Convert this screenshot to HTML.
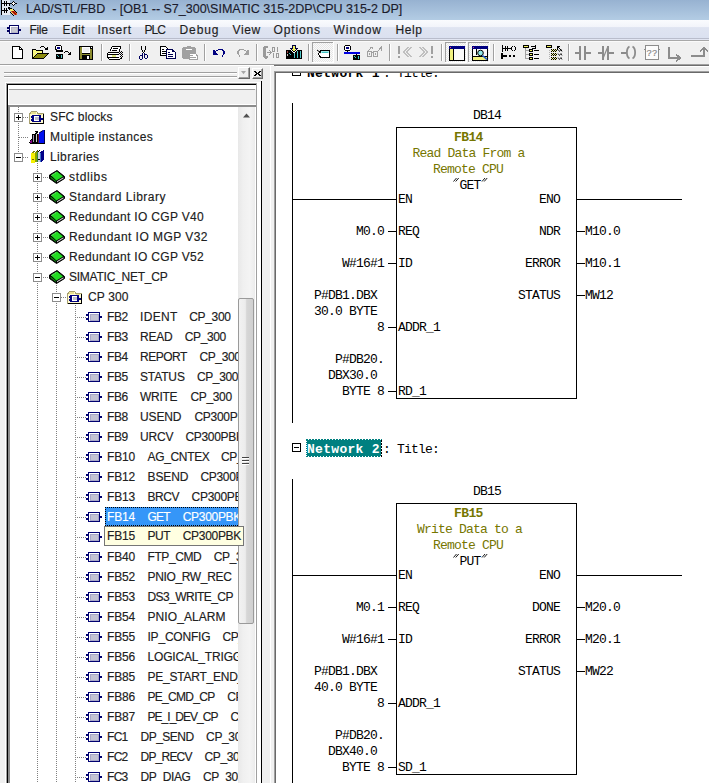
<!DOCTYPE html>
<html><head><meta charset="utf-8"><style>
*{margin:0;padding:0;box-sizing:border-box}
html,body{width:709px;height:783px;overflow:hidden;background:#f0f0f0}
body{position:relative;font-family:"Liberation Sans",sans-serif;font-size:12px;color:#1a1a1a}
.a{position:absolute}
.t{position:absolute;white-space:pre;line-height:20px;-webkit-text-stroke:0.15px currentColor}
svg{position:absolute;overflow:visible}
</style></head><body>

<div class="a" style="left:0;top:0;width:709px;height:20px;background:linear-gradient(#97b2d1,#b3cce4)"></div>
<div class="t" style="left:26px;top:-1px;font-size:12.5px;color:#1b1b2b">LAD/STL/FBD  - [OB1 -- S7_300\SIMATIC 315-2DP\CPU 315-2 DP]</div>
<svg style="left:0;top:0px" width="18" height="17" viewBox="0 0 18 17" shape-rendering="crispEdges"><rect x="2" y="0" width="8" height="15" fill="#eef2f6" opacity=".85"/><rect x="1" y="0" width="1" height="15" fill="#000"/><rect x="2" y="3" width="9" height="1" fill="#000"/><rect x="4" y="1" width="1" height="5" fill="#000"/><rect x="6" y="1" width="1" height="5" fill="#000"/><rect x="9" y="3" width="1" height="3" fill="#000"/><rect x="2" y="10" width="6" height="1" fill="#000"/><rect x="4" y="8" width="1" height="5" fill="#000"/><rect x="6" y="8" width="1" height="5" fill="#000"/><rect x="12" y="2" width="3" height="3" fill="#fff"/><rect x="13" y="1" width="1" height="1" fill="#000"/><rect x="12" y="2" width="1" height="1" fill="#000"/><rect x="14" y="2" width="1" height="1" fill="#000"/><rect x="11" y="3" width="1" height="1" fill="#000"/><rect x="15" y="3" width="1" height="1" fill="#000"/><rect x="12" y="4" width="1" height="1" fill="#000"/><rect x="14" y="4" width="1" height="1" fill="#000"/><rect x="13" y="5" width="1" height="1" fill="#000"/><rect x="16" y="3" width="1" height="1" fill="#000"/><rect x="8" y="7" width="1" height="1" fill="#000"/><rect x="9" y="7" width="1" height="1" fill="#000"/><rect x="10" y="8" width="1" height="1" fill="#000"/><rect x="9" y="8" width="1" height="1" fill="#000"/><rect x="8" y="8" width="1" height="1" fill="#000"/><rect x="9" y="9" width="1" height="1" fill="#000"/><rect x="11" y="8" width="1" height="1" fill="#000"/><rect x="10" y="9" width="1" height="1" fill="#f8f060"/><rect x="11" y="9" width="1" height="1" fill="#f8f060"/><rect x="12" y="10" width="1" height="1" fill="#f8f060"/><rect x="10" y="10" width="1" height="1" fill="#f8f060"/><rect x="11" y="10" width="1" height="1" fill="#f8f060"/><rect x="13" y="9" width="1" height="1" fill="#000"/><rect x="14" y="10" width="1" height="1" fill="#000"/><rect x="15" y="11" width="1" height="1" fill="#000"/><rect x="16" y="12" width="1" height="1" fill="#000"/><rect x="10" y="12" width="1" height="1" fill="#000"/><rect x="11" y="13" width="1" height="1" fill="#000"/><rect x="12" y="14" width="1" height="1" fill="#000"/><rect x="13" y="15" width="1" height="1" fill="#000"/><rect x="12" y="11" width="1" height="1" fill="#a01000"/><rect x="13" y="12" width="1" height="1" fill="#a01000"/><rect x="14" y="13" width="1" height="1" fill="#a01000"/><rect x="15" y="14" width="1" height="1" fill="#a01000"/><rect x="13" y="11" width="1" height="1" fill="#a01000"/><rect x="14" y="12" width="1" height="1" fill="#a01000"/><rect x="15" y="13" width="1" height="1" fill="#a01000"/><rect x="11" y="11" width="1" height="1" fill="#e06020"/><rect x="12" y="12" width="1" height="1" fill="#e06020"/><rect x="13" y="13" width="1" height="1" fill="#e06020"/><rect x="14" y="14" width="1" height="1" fill="#e06020"/><rect x="14" y="11" width="1" height="1" fill="#e06020"/><rect x="15" y="12" width="1" height="1" fill="#e06020"/><rect x="16" y="13" width="1" height="1" fill="#e06020"/><rect x="16" y="14" width="1" height="1" fill="#e06020"/><rect x="12" y="9" width="1" height="1" fill="#f8e080"/><rect x="13" y="10" width="1" height="1" fill="#f8e080"/><rect x="11" y="12" width="1" height="1" fill="#f8e080"/><rect x="12" y="13" width="1" height="1" fill="#f8e080"/></svg>
<div class="a" style="left:0;top:20px;width:709px;height:18px;background:linear-gradient(#fafbfe 0,#f2f4fa 38%,#dfe4f1 42%,#dbe1f0 100%)"></div>
<div class="a" style="left:0;top:38px;width:709px;height:1px;background:#b9bdcc"></div>
<div class="a" style="left:0;top:39px;width:709px;height:1px;background:#e2e6f3"></div>
<div class="a" style="left:0;top:40px;width:709px;height:1px;background:#a8a8a8"></div>
<div class="a" style="left:0;top:41px;width:709px;height:1px;background:#fafafa"></div>
<svg style="left:0;top:20px" width="24" height="18" viewBox="0 20 24 18" shape-rendering="crispEdges"><rect x="9" y="25" width="10" height="9" fill="#000060"/><rect x="10" y="26" width="8" height="7" fill="#fff"/><rect x="11" y="27" width="7" height="6" fill="#b4b4c8"/><rect x="12" y="28" width="5" height="4" fill="#c8c8d0"/><rect x="7" y="27" width="2" height="2" fill="#000060"/><rect x="7" y="30" width="2" height="2" fill="#000060"/><rect x="19" y="29" width="2" height="2" fill="#000060"/></svg>
<div class="t" style="left:29.5px;top:21px;line-height:19px;letter-spacing:-0.315px;color:#1e1e1e">File</div>
<div class="t" style="left:62.5px;top:21px;line-height:19px;letter-spacing:0.438px;color:#1e1e1e">Edit</div>
<div class="t" style="left:97.5px;top:21px;line-height:19px;letter-spacing:0.697px;color:#1e1e1e">Insert</div>
<div class="t" style="left:144.5px;top:21px;line-height:19px;letter-spacing:-0.922px;color:#1e1e1e">PLC</div>
<div class="t" style="left:179.5px;top:21px;line-height:19px;letter-spacing:0.906px;color:#1e1e1e">Debug</div>
<div class="t" style="left:232.5px;top:21px;line-height:19px;letter-spacing:0.601px;color:#1e1e1e">View</div>
<div class="t" style="left:273.5px;top:21px;line-height:19px;letter-spacing:0.873px;color:#1e1e1e">Options</div>
<div class="t" style="left:333.5px;top:21px;line-height:19px;letter-spacing:0.963px;color:#1e1e1e">Window</div>
<div class="t" style="left:395.5px;top:21px;line-height:19px;letter-spacing:0.571px;color:#1e1e1e">Help</div>
<div class="a" style="left:0;top:64px;width:709px;height:1px;background:#a0a0a0"></div>
<div class="a" style="left:0;top:65px;width:709px;height:1px;background:#fff"></div>
<svg style="left:0;top:40px" width="709" height="25" viewBox="0 40 709 25" shape-rendering="crispEdges"><path d="M12.5 46.5h7l3 3v9h-10z" fill="#fff" stroke="#000"/><path d="M19.5 46.5v3h3" fill="none" stroke="#000"/><rect x="33" y="50" width="3" height="8" fill="#f8f880"/><rect x="36" y="51" width="6" height="2" fill="#f8f880"/><rect x="37" y="54" width="10" height="1" fill="#8c8c10"/><rect x="36" y="55" width="10" height="1" fill="#8c8c10"/><rect x="35" y="56" width="10" height="1" fill="#8c8c10"/><rect x="34" y="57" width="10" height="1" fill="#8c8c10"/><rect x="32" y="49" width="1" height="10" fill="#000"/><rect x="33" y="49" width="3" height="1" fill="#000"/><rect x="36" y="50" width="7" height="1" fill="#000"/><rect x="42" y="50" width="1" height="3" fill="#000"/><rect x="37" y="53" width="12" height="1" fill="#000"/><rect x="32" y="58" width="12" height="1" fill="#000"/><rect x="36" y="54" width="1" height="1" fill="#000"/><rect x="35" y="55" width="1" height="1" fill="#000"/><rect x="34" y="56" width="1" height="1" fill="#000"/><rect x="33" y="57" width="1" height="1" fill="#000"/><rect x="47" y="54" width="1" height="1" fill="#000"/><rect x="46" y="55" width="1" height="1" fill="#000"/><rect x="45" y="56" width="1" height="1" fill="#000"/><rect x="44" y="57" width="1" height="1" fill="#000"/><rect x="40" y="47" width="1" height="1" fill="#000"/><rect x="41" y="46" width="1" height="1" fill="#000"/><rect x="42" y="46" width="1" height="1" fill="#000"/><rect x="43" y="46" width="1" height="1" fill="#000"/><rect x="44" y="47" width="1" height="1" fill="#000"/><rect x="45" y="48" width="1" height="1" fill="#000"/><rect x="47" y="47" width="1" height="1" fill="#000"/><rect x="46" y="48" width="1" height="1" fill="#000"/><rect x="47" y="48" width="1" height="1" fill="#000"/><rect x="45" y="49" width="1" height="1" fill="#000"/><rect x="46" y="49" width="1" height="1" fill="#000"/><rect x="47" y="49" width="1" height="1" fill="#000"/><rect x="56" y="46" width="5" height="4" fill="#fff"/><rect x="56" y="45" width="5" height="1" fill="#000"/><rect x="55" y="46" width="1" height="4" fill="#000"/><rect x="61" y="46" width="1" height="4" fill="#000"/><rect x="56" y="49" width="1" height="1" fill="#000"/><rect x="57" y="47" width="3" height="2" fill="#000080"/><rect x="56" y="50" width="7" height="2" fill="#000"/><rect x="56" y="54" width="7" height="5" fill="#000"/><rect x="57" y="55" width="1" height="1" fill="#40c0c0"/><rect x="58" y="56" width="1" height="1" fill="#40c0c0"/><rect x="61" y="55" width="1" height="3" fill="#60d0d0"/><rect x="64" y="52" width="1" height="1" fill="#000"/><rect x="65" y="51" width="1" height="1" fill="#000"/><rect x="66" y="51" width="1" height="1" fill="#000"/><rect x="67" y="51" width="1" height="1" fill="#000"/><rect x="68" y="52" width="1" height="1" fill="#000"/><rect x="70" y="52" width="1" height="1" fill="#000"/><rect x="69" y="53" width="1" height="1" fill="#000"/><rect x="70" y="53" width="1" height="1" fill="#000"/><rect x="68" y="54" width="1" height="1" fill="#000"/><rect x="69" y="54" width="1" height="1" fill="#000"/><rect x="70" y="54" width="1" height="1" fill="#000"/><rect x="79" y="46" width="14" height="14" fill="#000"/><rect x="80" y="47" width="2" height="12" fill="#8c8c30"/><rect x="90" y="49" width="2" height="10" fill="#8c8c30"/><rect x="80" y="54" width="12" height="1" fill="#8c8c30"/><rect x="82" y="47" width="8" height="6" fill="#fff"/><rect x="83" y="48" width="6" height="4" fill="#eeeeee"/><rect x="82" y="55" width="8" height="4" fill="#000"/><rect x="87" y="56" width="2" height="3" fill="#fff"/><rect x="91" y="47" width="1" height="1" fill="#fff"/><rect x="101" y="44" width="1" height="17" fill="#a0a0a0"/><rect x="102" y="44" width="1" height="17" fill="#fff"/><rect x="112" y="47" width="8" height="4" fill="#fff"/><rect x="111" y="48" width="1" height="3" fill="#fff"/><rect x="112" y="46" width="9" height="1" fill="#000"/><rect x="111" y="47" width="1" height="2" fill="#000"/><rect x="110" y="49" width="1" height="2" fill="#000"/><rect x="120" y="47" width="1" height="2" fill="#000"/><rect x="119" y="49" width="1" height="2" fill="#000"/><rect x="113" y="48" width="5" height="1" fill="#000"/><rect x="112" y="50" width="5" height="1" fill="#000"/><rect x="108" y="53" width="11" height="6" fill="#fff"/><rect x="108" y="52" width="11" height="1" fill="#000"/><rect x="107" y="53" width="1" height="5" fill="#000"/><rect x="108" y="54" width="11" height="1" fill="#000"/><rect x="108" y="57" width="11" height="1" fill="#000"/><rect x="109" y="59" width="10" height="1" fill="#000"/><rect x="108" y="58" width="1" height="1" fill="#000"/><rect x="112" y="55" width="4" height="2" fill="#e0e880"/><rect x="119" y="51" width="1" height="1" fill="#000"/><rect x="121" y="51" width="1" height="1" fill="#000"/><rect x="120" y="52" width="1" height="1" fill="#000"/><rect x="122" y="52" width="1" height="1" fill="#000"/><rect x="119" y="53" width="1" height="1" fill="#000"/><rect x="121" y="53" width="1" height="1" fill="#000"/><rect x="120" y="54" width="1" height="1" fill="#000"/><rect x="122" y="54" width="1" height="1" fill="#000"/><rect x="121" y="55" width="1" height="1" fill="#000"/><rect x="120" y="56" width="1" height="1" fill="#000"/><rect x="122" y="56" width="1" height="1" fill="#000"/><rect x="121" y="57" width="1" height="1" fill="#000"/><rect x="120" y="58" width="1" height="1" fill="#000"/><rect x="119" y="59" width="1" height="1" fill="#000"/><rect x="121" y="58" width="1" height="1" fill="#000"/><rect x="129" y="44" width="1" height="17" fill="#a0a0a0"/><rect x="130" y="44" width="1" height="17" fill="#fff"/><rect x="141" y="46" width="1" height="1" fill="#000"/><rect x="141" y="47" width="1" height="1" fill="#000"/><rect x="141" y="48" width="1" height="1" fill="#000"/><rect x="141" y="49" width="1" height="1" fill="#000"/><rect x="142" y="50" width="1" height="1" fill="#000"/><rect x="142" y="51" width="1" height="1" fill="#000"/><rect x="145" y="46" width="1" height="1" fill="#000"/><rect x="145" y="47" width="1" height="1" fill="#000"/><rect x="145" y="48" width="1" height="1" fill="#000"/><rect x="145" y="49" width="1" height="1" fill="#000"/><rect x="144" y="50" width="1" height="1" fill="#000"/><rect x="144" y="51" width="1" height="1" fill="#000"/><rect x="143" y="52" width="1" height="1" fill="#000"/><rect x="142" y="53" width="1" height="1" fill="#000060"/><rect x="144" y="53" width="1" height="1" fill="#000060"/><rect x="140" y="55" width="1" height="1" fill="#000060"/><rect x="141" y="55" width="1" height="1" fill="#000060"/><rect x="139" y="56" width="1" height="1" fill="#000060"/><rect x="139" y="57" width="1" height="1" fill="#000060"/><rect x="139" y="58" width="1" height="1" fill="#000060"/><rect x="142" y="54" width="1" height="1" fill="#000060"/><rect x="142" y="55" width="1" height="1" fill="#000060"/><rect x="142" y="56" width="1" height="1" fill="#000060"/><rect x="142" y="57" width="1" height="1" fill="#000060"/><rect x="142" y="58" width="1" height="1" fill="#000060"/><rect x="140" y="59" width="1" height="1" fill="#000060"/><rect x="141" y="59" width="1" height="1" fill="#000060"/><rect x="145" y="54" width="1" height="1" fill="#000060"/><rect x="146" y="54" width="1" height="1" fill="#000060"/><rect x="144" y="54" width="1" height="1" fill="#000060"/><rect x="144" y="55" width="1" height="1" fill="#000060"/><rect x="144" y="56" width="1" height="1" fill="#000060"/><rect x="144" y="57" width="1" height="1" fill="#000060"/><rect x="147" y="55" width="1" height="1" fill="#000060"/><rect x="147" y="56" width="1" height="1" fill="#000060"/><rect x="147" y="57" width="1" height="1" fill="#000060"/><rect x="145" y="58" width="1" height="1" fill="#000060"/><rect x="146" y="58" width="1" height="1" fill="#000060"/><path d="M160.5 46.5h5l2 2v7h-7z" fill="#fff" stroke="#000"/><rect x="162" y="49" width="2" height="1" fill="#000"/><rect x="162" y="51" width="4" height="1" fill="#000"/><rect x="162" y="53" width="4" height="1" fill="#000"/><path d="M166.5 49.5h6l2.5 2.5v6.5h-8.5z" fill="#fff" stroke="#000050"/><rect x="172" y="50" width="1" height="2" fill="#000050"/><rect x="172" y="51" width="3" height="1" fill="#000050"/><rect x="168" y="52" width="2" height="1" fill="#000050"/><rect x="168" y="54" width="5" height="1" fill="#000050"/><rect x="168" y="56" width="5" height="1" fill="#000050"/><path d="M183 47h4v-1h4v1h4v1h1v10h-1v1h-12v-1h-1v-10h1z" fill="#a0a0a0"/><rect x="186" y="49" width="6" height="1" fill="#fff"/><path d="M189.5 53.5h5.5l2 2v4h-7.5z" fill="#fff" stroke="#a0a0a0"/><rect x="195" y="54" width="1" height="1" fill="#fff"/><rect x="190" y="55" width="3" height="1" fill="#a0a0a0"/><rect x="190" y="57" width="6" height="1" fill="#a0a0a0"/><rect x="204" y="44" width="1" height="17" fill="#a0a0a0"/><rect x="205" y="44" width="1" height="17" fill="#fff"/><rect x="213" y="50" width="1" height="1" fill="#000080"/><rect x="213" y="51" width="1" height="1" fill="#000080"/><rect x="214" y="51" width="1" height="1" fill="#000080"/><rect x="213" y="52" width="1" height="1" fill="#000080"/><rect x="214" y="52" width="1" height="1" fill="#000080"/><rect x="215" y="52" width="1" height="1" fill="#000080"/><rect x="213" y="53" width="1" height="1" fill="#000080"/><rect x="214" y="53" width="1" height="1" fill="#000080"/><rect x="215" y="53" width="1" height="1" fill="#000080"/><rect x="216" y="53" width="1" height="1" fill="#000080"/><rect x="213" y="54" width="1" height="1" fill="#000080"/><rect x="214" y="54" width="1" height="1" fill="#000080"/><rect x="215" y="54" width="1" height="1" fill="#000080"/><rect x="216" y="54" width="1" height="1" fill="#000080"/><rect x="217" y="54" width="1" height="1" fill="#000080"/><rect x="214" y="50" width="1" height="1" fill="#000080"/><rect x="215" y="51" width="1" height="1" fill="#000080"/><rect x="216" y="50" width="1" height="1" fill="#000080"/><rect x="217" y="50" width="1" height="1" fill="#000080"/><rect x="218" y="49" width="1" height="1" fill="#000080"/><rect x="219" y="49" width="1" height="1" fill="#000080"/><rect x="220" y="49" width="1" height="1" fill="#000080"/><rect x="221" y="49" width="1" height="1" fill="#000080"/><rect x="222" y="49" width="1" height="1" fill="#000080"/><rect x="222" y="50" width="1" height="1" fill="#000080"/><rect x="223" y="50" width="1" height="1" fill="#000080"/><rect x="223" y="51" width="1" height="1" fill="#000080"/><rect x="224" y="51" width="1" height="1" fill="#000080"/><rect x="223" y="52" width="1" height="1" fill="#000080"/><rect x="224" y="52" width="1" height="1" fill="#000080"/><rect x="223" y="53" width="1" height="1" fill="#000080"/><rect x="224" y="53" width="1" height="1" fill="#000080"/><rect x="223" y="54" width="1" height="1" fill="#000080"/><rect x="222" y="55" width="1" height="1" fill="#000080"/><rect x="222" y="56" width="1" height="1" fill="#000080"/><rect x="248" y="50" width="1" height="1" fill="#a0a0a0"/><rect x="248" y="51" width="1" height="1" fill="#a0a0a0"/><rect x="247" y="51" width="1" height="1" fill="#a0a0a0"/><rect x="248" y="52" width="1" height="1" fill="#a0a0a0"/><rect x="247" y="52" width="1" height="1" fill="#a0a0a0"/><rect x="246" y="52" width="1" height="1" fill="#a0a0a0"/><rect x="248" y="53" width="1" height="1" fill="#a0a0a0"/><rect x="247" y="53" width="1" height="1" fill="#a0a0a0"/><rect x="246" y="53" width="1" height="1" fill="#a0a0a0"/><rect x="245" y="53" width="1" height="1" fill="#a0a0a0"/><rect x="248" y="54" width="1" height="1" fill="#a0a0a0"/><rect x="247" y="54" width="1" height="1" fill="#a0a0a0"/><rect x="246" y="54" width="1" height="1" fill="#a0a0a0"/><rect x="245" y="54" width="1" height="1" fill="#a0a0a0"/><rect x="244" y="54" width="1" height="1" fill="#a0a0a0"/><rect x="247" y="50" width="1" height="1" fill="#a0a0a0"/><rect x="246" y="51" width="1" height="1" fill="#a0a0a0"/><rect x="245" y="50" width="1" height="1" fill="#a0a0a0"/><rect x="244" y="50" width="1" height="1" fill="#a0a0a0"/><rect x="243" y="49" width="1" height="1" fill="#a0a0a0"/><rect x="242" y="49" width="1" height="1" fill="#a0a0a0"/><rect x="241" y="49" width="1" height="1" fill="#a0a0a0"/><rect x="240" y="49" width="1" height="1" fill="#a0a0a0"/><rect x="239" y="49" width="1" height="1" fill="#a0a0a0"/><rect x="239" y="50" width="1" height="1" fill="#a0a0a0"/><rect x="238" y="50" width="1" height="1" fill="#a0a0a0"/><rect x="238" y="51" width="1" height="1" fill="#a0a0a0"/><rect x="237" y="51" width="1" height="1" fill="#a0a0a0"/><rect x="238" y="52" width="1" height="1" fill="#a0a0a0"/><rect x="237" y="52" width="1" height="1" fill="#a0a0a0"/><rect x="238" y="53" width="1" height="1" fill="#a0a0a0"/><rect x="237" y="53" width="1" height="1" fill="#a0a0a0"/><rect x="238" y="54" width="1" height="1" fill="#a0a0a0"/><rect x="239" y="55" width="1" height="1" fill="#a0a0a0"/><rect x="239" y="56" width="1" height="1" fill="#a0a0a0"/><rect x="256" y="44" width="1" height="17" fill="#a0a0a0"/><rect x="257" y="44" width="1" height="17" fill="#fff"/><g fill="#9a9a9a"><rect x="263" y="47" width="3" height="10"/><rect x="264" y="46" width="4" height="2"/><rect x="264" y="56" width="4" height="2"/><rect x="265" y="58" width="2" height="1"/><rect x="267" y="52" width="4" height="1"/><rect x="269" y="50" width="1" height="1"/><rect x="270" y="51" width="1" height="3"/><rect x="269" y="54" width="1" height="1"/><rect x="271" y="52" width="1" height="1"/><rect x="277" y="47" width="1" height="5"/><rect x="273" y="53" width="1" height="5"/></g><rect x="272.5" y="47.5" width="2" height="4" fill="none" stroke="#9a9a9a"/><rect x="276.5" y="53.5" width="2" height="4" fill="none" stroke="#9a9a9a"/><rect x="286" y="50" width="16" height="9" fill="#000"/><rect x="287" y="51" width="1" height="2" fill="#a04040"/><rect x="287" y="54" width="1" height="2" fill="#c0c0c0"/><rect x="289" y="53" width="1" height="1" fill="#40c0c0"/><rect x="290" y="54" width="1" height="1" fill="#40c0c0"/><rect x="294" y="53" width="1" height="5" fill="#50c8c8"/><rect x="297" y="51" width="1" height="7" fill="#50c8c8"/><rect x="300" y="51" width="1" height="7" fill="#50c8c8"/><rect x="292" y="45" width="1" height="1" fill="#000040"/><rect x="293" y="45" width="1" height="1" fill="#000040"/><rect x="294" y="45" width="1" height="1" fill="#000040"/><rect x="295" y="45" width="1" height="1" fill="#000040"/><rect x="292" y="46" width="1" height="1" fill="#000040"/><rect x="292" y="47" width="1" height="1" fill="#000040"/><rect x="295" y="46" width="1" height="1" fill="#000040"/><rect x="295" y="47" width="1" height="1" fill="#000040"/><rect x="290" y="48" width="1" height="1" fill="#000040"/><rect x="291" y="48" width="1" height="1" fill="#000040"/><rect x="292" y="48" width="1" height="1" fill="#000040"/><rect x="295" y="48" width="1" height="1" fill="#000040"/><rect x="296" y="48" width="1" height="1" fill="#000040"/><rect x="297" y="48" width="1" height="1" fill="#000040"/><rect x="291" y="49" width="1" height="1" fill="#000040"/><rect x="296" y="49" width="1" height="1" fill="#000040"/><rect x="293" y="46" width="1" height="1" fill="#f0f060"/><rect x="294" y="46" width="1" height="1" fill="#f0f060"/><rect x="293" y="47" width="1" height="1" fill="#f0f060"/><rect x="294" y="47" width="1" height="1" fill="#f0f060"/><rect x="293" y="48" width="1" height="1" fill="#f0f060"/><rect x="294" y="48" width="1" height="1" fill="#f0f060"/><rect x="292" y="49" width="1" height="1" fill="#f0f060"/><rect x="293" y="49" width="1" height="1" fill="#f0f060"/><rect x="294" y="49" width="1" height="1" fill="#f0f060"/><rect x="295" y="49" width="1" height="1" fill="#f0f060"/><rect x="293" y="50" width="1" height="1" fill="#f0f060"/><rect x="294" y="50" width="1" height="1" fill="#f0f060"/><rect x="291" y="50" width="1" height="1" fill="#ffffff"/><rect x="292" y="51" width="1" height="1" fill="#ffffff"/><rect x="293" y="52" width="1" height="1" fill="#ffffff"/><rect x="296" y="50" width="1" height="1" fill="#ffffff"/><rect x="295" y="51" width="1" height="1" fill="#ffffff"/><rect x="294" y="52" width="1" height="1" fill="#ffffff"/><rect x="308" y="44" width="1" height="17" fill="#a0a0a0"/><rect x="309" y="44" width="1" height="17" fill="#fff"/><defs><pattern id="chk312" width="2" height="2" patternUnits="userSpaceOnUse" x="312" y="42"><rect width="2" height="2" fill="#fafafa"/><rect width="1" height="1" fill="#e6e6e6"/><rect x="1" y="1" width="1" height="1" fill="#e6e6e6"/></pattern></defs><rect x="312" y="42" width="22" height="21" fill="url(#chk312)"/><rect x="312" y="42" width="22" height="1" fill="#a0a0a0"/><rect x="312" y="42" width="1" height="21" fill="#a0a0a0"/><rect x="312" y="62" width="22" height="1" fill="#fff"/><rect x="333" y="42" width="1" height="21" fill="#fff"/><path d="M321 50.5h8.5v7h-8.5l-3-3.5z" fill="#fff" stroke="#000"/><rect x="321" y="51" width="8" height="2" fill="#a0e8e8"/><rect x="322" y="52" width="6" height="1" fill="#40c0c0"/><path d="M317 50l4 3" stroke="#000" shape-rendering="auto"/><rect x="337" y="44" width="1" height="17" fill="#a0a0a0"/><rect x="338" y="44" width="1" height="17" fill="#fff"/><rect x="345" y="45" width="5" height="1" fill="#000"/><rect x="344" y="46" width="1" height="4" fill="#000"/><rect x="350" y="46" width="1" height="4" fill="#000"/><rect x="345" y="50" width="5" height="1" fill="#000"/><rect x="345" y="46" width="5" height="4" fill="#fff"/><rect x="346" y="47" width="3" height="2" fill="#000080"/><rect x="347" y="51" width="1" height="1" fill="#000"/><rect x="344" y="52" width="16" height="2" fill="#0000e0"/><rect x="356" y="54" width="1" height="1" fill="#000"/><rect x="353" y="55" width="7" height="5" fill="#000"/><rect x="354" y="56" width="1" height="1" fill="#3cc"/><rect x="355" y="57" width="1" height="1" fill="#3cc"/><rect x="358" y="56" width="1" height="3" fill="#3cc"/><g fill="none" stroke="#a0a0a0" stroke-width="1"><rect x="367.5" y="51.5" width="4" height="5"/><rect x="373.5" y="51.5" width="4" height="5"/><path d="M371.5 52.5h2M368 51.5l3-4h1.5v1.5M377.5 51.5l3.5-4v3"/></g><rect x="369" y="53" width="1" height="2" fill="#a0a0a0"/><rect x="375" y="53" width="1" height="2" fill="#a0a0a0"/><rect x="389" y="44" width="1" height="17" fill="#a0a0a0"/><rect x="390" y="44" width="1" height="17" fill="#fff"/><g fill="#a0a0a0"><rect x="398" y="46" width="2" height="8"/><rect x="398" y="56" width="2" height="2"/><rect x="431" y="46" width="2" height="8"/><rect x="431" y="56" width="2" height="2"/></g><g fill="none" stroke="#909090" stroke-width="1" shape-rendering="auto"><path d="M408.5 47L403.5 52L408.5 57M411.5 47L406.5 52L411.5 57M419.5 47L424.5 52L419.5 57M422.5 47L427.5 52L422.5 57"/></g><rect x="441" y="44" width="1" height="17" fill="#a0a0a0"/><rect x="442" y="44" width="1" height="17" fill="#fff"/><defs><pattern id="chk445" width="2" height="2" patternUnits="userSpaceOnUse" x="445" y="42"><rect width="2" height="2" fill="#fafafa"/><rect width="1" height="1" fill="#e6e6e6"/><rect x="1" y="1" width="1" height="1" fill="#e6e6e6"/></pattern></defs><rect x="445" y="42" width="22" height="21" fill="url(#chk445)"/><rect x="445" y="42" width="22" height="1" fill="#a0a0a0"/><rect x="445" y="42" width="1" height="21" fill="#a0a0a0"/><rect x="445" y="62" width="22" height="1" fill="#fff"/><rect x="466" y="42" width="1" height="21" fill="#fff"/><rect x="449" y="46" width="16" height="15" fill="#000"/><rect x="449" y="46" width="16" height="3" fill="#000080"/><rect x="450" y="49" width="14" height="11" fill="#fafafa"/><rect x="450" y="49" width="3" height="11" fill="#f0f080"/><rect x="453" y="49" width="1" height="11" fill="#000"/><rect x="450" y="47" width="1" height="1" fill="#e04080"/><defs><pattern id="chk468" width="2" height="2" patternUnits="userSpaceOnUse" x="468" y="42"><rect width="2" height="2" fill="#fafafa"/><rect width="1" height="1" fill="#e6e6e6"/><rect x="1" y="1" width="1" height="1" fill="#e6e6e6"/></pattern></defs><rect x="468" y="42" width="22" height="21" fill="url(#chk468)"/><rect x="468" y="42" width="22" height="1" fill="#a0a0a0"/><rect x="468" y="42" width="1" height="21" fill="#a0a0a0"/><rect x="468" y="62" width="22" height="1" fill="#fff"/><rect x="489" y="42" width="1" height="21" fill="#fff"/><rect x="472" y="46" width="16" height="15" fill="#000"/><rect x="472" y="46" width="16" height="3" fill="#000080"/><rect x="473" y="49" width="14" height="11" fill="#fafafa"/><rect x="473" y="57" width="14" height="3" fill="#f0f080"/><rect x="476" y="49" width="1" height="6" fill="#000"/><rect x="473" y="56" width="14" height="1" fill="#000"/><rect x="473" y="47" width="1" height="1" fill="#e04080"/><circle cx="480.5" cy="53" r="2.8" fill="#90e8e8" stroke="#000" stroke-width="1" shape-rendering="auto"/><path d="M482.5 55.5l4.5 4" stroke="#2060d0" stroke-width="1.6" shape-rendering="auto"/><rect x="493" y="44" width="1" height="17" fill="#a0a0a0"/><rect x="494" y="44" width="1" height="17" fill="#fff"/><g fill="#000"><rect x="502" y="45" width="1" height="7"/><rect x="502" y="48" width="9" height="1"/><rect x="505" y="46" width="1" height="5"/><rect x="507" y="46" width="1" height="5"/><rect x="512" y="46" width="1" height="1"/><rect x="511" y="47" width="1" height="3"/><rect x="512" y="50" width="1" height="1"/><rect x="514" y="46" width="1" height="1"/><rect x="515" y="47" width="1" height="3"/><rect x="514" y="50" width="1" height="1"/><rect x="501" y="53" width="2" height="6"/><rect x="503" y="55" width="4" height="2"/><rect x="509" y="55" width="2" height="2"/><rect x="513" y="55" width="2" height="2"/></g><g><rect x="523" y="45" width="6" height="3" fill="#000"/><rect x="524" y="46" width="4" height="1" fill="#f0f060"/><rect x="531" y="46" width="4" height="1" fill="#000"/><path d="M535 45v3h-3" fill="none" stroke="#000"/><rect x="525" y="48" width="1" height="11" fill="#a0a0a0"/><rect x="526" y="50" width="3" height="1" fill="#a0a0a0"/><rect x="529" y="49" width="4" height="3" fill="#000"/><rect x="530" y="50" width="2" height="1" fill="#f0f060"/><rect x="534" y="50" width="5" height="1" fill="#000"/><rect x="526" y="54" width="3" height="1" fill="#a0a0a0"/><rect x="529" y="53" width="4" height="3" fill="#000"/><rect x="530" y="54" width="2" height="1" fill="#f0f060"/><rect x="534" y="54" width="5" height="1" fill="#000"/><rect x="526" y="58" width="3" height="1" fill="#a0a0a0"/><rect x="529" y="57" width="4" height="3" fill="#000"/><rect x="530" y="58" width="2" height="1" fill="#f0f060"/><rect x="534" y="58" width="5" height="1" fill="#000"/></g><rect x="546" y="45" width="6" height="3" fill="#000"/><rect x="547" y="46" width="4" height="1" fill="#f0f060"/><rect x="557" y="46" width="1" height="1" fill="#000"/><rect x="558" y="46" width="1" height="1" fill="#000"/><rect x="559" y="46" width="1" height="1" fill="#000"/><rect x="557" y="47" width="1" height="1" fill="#000"/><rect x="558" y="47" width="1" height="1" fill="#000"/><rect x="557" y="48" width="1" height="1" fill="#000"/><rect x="559" y="48" width="1" height="1" fill="#000"/><rect x="557" y="49" width="1" height="1" fill="#000"/><rect x="560" y="49" width="1" height="1" fill="#000"/><rect x="561" y="50" width="1" height="1" fill="#000"/><rect x="549" y="50" width="1" height="1" fill="#b0b0b0"/><rect x="549" y="52" width="1" height="1" fill="#b0b0b0"/><rect x="549" y="54" width="1" height="1" fill="#b0b0b0"/><rect x="549" y="56" width="1" height="1" fill="#b0b0b0"/><rect x="549" y="58" width="1" height="1" fill="#b0b0b0"/><rect x="551" y="49" width="1" height="1" fill="#000"/><rect x="551" y="50" width="1" height="1" fill="#f0f0a0"/><rect x="551" y="51" width="1" height="1" fill="#000"/><rect x="552" y="49" width="1" height="1" fill="#f0f0a0"/><rect x="552" y="50" width="1" height="1" fill="#000"/><rect x="552" y="51" width="1" height="1" fill="#f0f0a0"/><rect x="553" y="49" width="1" height="1" fill="#000"/><rect x="553" y="50" width="1" height="1" fill="#f0f0a0"/><rect x="553" y="51" width="1" height="1" fill="#000"/><rect x="554" y="49" width="1" height="1" fill="#f0f0a0"/><rect x="554" y="50" width="1" height="1" fill="#000"/><rect x="554" y="51" width="1" height="1" fill="#f0f0a0"/><rect x="555" y="49" width="1" height="1" fill="#000"/><rect x="555" y="50" width="1" height="1" fill="#f0f0a0"/><rect x="555" y="51" width="1" height="1" fill="#000"/><rect x="556" y="49" width="1" height="1" fill="#f0f0a0"/><rect x="556" y="50" width="1" height="1" fill="#000"/><rect x="556" y="51" width="1" height="1" fill="#f0f0a0"/><path d="M558 49.5l1.5 2l1.5-2l1 2" fill="none" stroke="#000" stroke-width=".8" shape-rendering="auto"/><rect x="551" y="53" width="1" height="1" fill="#000"/><rect x="551" y="54" width="1" height="1" fill="#f0f0a0"/><rect x="551" y="55" width="1" height="1" fill="#000"/><rect x="552" y="53" width="1" height="1" fill="#f0f0a0"/><rect x="552" y="54" width="1" height="1" fill="#000"/><rect x="552" y="55" width="1" height="1" fill="#f0f0a0"/><rect x="553" y="53" width="1" height="1" fill="#000"/><rect x="553" y="54" width="1" height="1" fill="#f0f0a0"/><rect x="553" y="55" width="1" height="1" fill="#000"/><rect x="554" y="53" width="1" height="1" fill="#f0f0a0"/><rect x="554" y="54" width="1" height="1" fill="#000"/><rect x="554" y="55" width="1" height="1" fill="#f0f0a0"/><rect x="555" y="53" width="1" height="1" fill="#000"/><rect x="555" y="54" width="1" height="1" fill="#f0f0a0"/><rect x="555" y="55" width="1" height="1" fill="#000"/><rect x="556" y="53" width="1" height="1" fill="#f0f0a0"/><rect x="556" y="54" width="1" height="1" fill="#000"/><rect x="556" y="55" width="1" height="1" fill="#f0f0a0"/><path d="M558 53.5l1.5 2l1.5-2l1 2" fill="none" stroke="#000" stroke-width=".8" shape-rendering="auto"/><rect x="551" y="57" width="1" height="1" fill="#000"/><rect x="551" y="58" width="1" height="1" fill="#f0f0a0"/><rect x="551" y="59" width="1" height="1" fill="#000"/><rect x="552" y="57" width="1" height="1" fill="#f0f0a0"/><rect x="552" y="58" width="1" height="1" fill="#000"/><rect x="552" y="59" width="1" height="1" fill="#f0f0a0"/><rect x="553" y="57" width="1" height="1" fill="#000"/><rect x="553" y="58" width="1" height="1" fill="#f0f0a0"/><rect x="553" y="59" width="1" height="1" fill="#000"/><rect x="554" y="57" width="1" height="1" fill="#f0f0a0"/><rect x="554" y="58" width="1" height="1" fill="#000"/><rect x="554" y="59" width="1" height="1" fill="#f0f0a0"/><rect x="555" y="57" width="1" height="1" fill="#000"/><rect x="555" y="58" width="1" height="1" fill="#f0f0a0"/><rect x="555" y="59" width="1" height="1" fill="#000"/><rect x="556" y="57" width="1" height="1" fill="#f0f0a0"/><rect x="556" y="58" width="1" height="1" fill="#000"/><rect x="556" y="59" width="1" height="1" fill="#f0f0a0"/><path d="M558 57.5l1.5 2l1.5-2l1 2" fill="none" stroke="#000" stroke-width=".8" shape-rendering="auto"/><rect x="568" y="44" width="1" height="17" fill="#a0a0a0"/><rect x="569" y="44" width="1" height="17" fill="#fff"/><g fill="#8c8c8c"><rect x="575" y="52" width="5" height="2"/><rect x="579" y="46" width="2" height="14"/><rect x="584" y="46" width="2" height="14"/><rect x="586" y="52" width="5" height="2"/></g><g fill="#8c8c8c"><rect x="598" y="52" width="5" height="2"/><rect x="602" y="46" width="2" height="14"/><rect x="607" y="46" width="2" height="14"/><rect x="609" y="52" width="5" height="2"/></g><path d="M603 58.5l4.5-11" stroke="#8c8c8c" stroke-width="1.2" shape-rendering="auto"/><rect x="621" y="52" width="5" height="2" fill="#8c8c8c"/><path d="M629.5 46.5C626 48.5 626 56.5 629.5 58.5M632.5 46.5C636 48.5 636 56.5 632.5 58.5" fill="none" stroke="#8c8c8c" stroke-width="1.8" shape-rendering="auto"/><rect x="645.5" y="45.5" width="13" height="14" fill="#fcfcfc" stroke="#8c8c8c"/><rect x="644" y="49" width="2" height="1" fill="#8c8c8c"/><rect x="658" y="49" width="2" height="1" fill="#8c8c8c"/><text x="646.5" y="56" font-family="Liberation Mono" font-size="9" fill="#8c8c8c" stroke="#8c8c8c" stroke-width=".2">??</text><path d="M669 47v11h10" fill="none" stroke="#8c8c8c" stroke-width="2"/><path d="M676 54.5l4 3.5l-4 3.5" fill="none" stroke="#8c8c8c" stroke-width="1.8"/><path d="M691 56h13v-8" fill="none" stroke="#8c8c8c" stroke-width="2"/><path d="M700 51.5l4-4l4 4" fill="none" stroke="#8c8c8c" stroke-width="1.8"/></svg>
<div class="a" style="left:4px;top:72px;width:233px;height:1px;background:#a0a0a0"></div>
<div class="a" style="left:4px;top:73px;width:233px;height:1px;background:#fff"></div>
<div class="a" style="left:4px;top:76px;width:233px;height:1px;background:#a0a0a0"></div>
<div class="a" style="left:4px;top:77px;width:233px;height:1px;background:#fff"></div>
<div class="a" style="left:238px;top:67px;width:12px;height:12px;background:#f0f0f0;border-top:1px solid #fff;border-left:1px solid #fff;border-right:1px solid #696969;border-bottom:1px solid #696969"></div>
<div class="a" style="left:239px;top:77px;width:10px;height:1px;background:#a0a0a0"></div><div class="a" style="left:248px;top:68px;width:1px;height:10px;background:#a0a0a0"></div>
<svg style="left:241px;top:71px" width="6" height="4" viewBox="0 0 6 4"><path d="M0 0h5l-2.5 3.2z" fill="#a8a8a8"/></svg>
<div class="a" style="left:252px;top:68px;width:11px;height:11px;background:#f0f0f0;border-top:1px solid #fff;border-left:1px solid #fff;border-right:1px solid #696969;border-bottom:1px solid #696969"></div>
<div class="a" style="left:253px;top:77px;width:9px;height:1px;background:#a0a0a0"></div><div class="a" style="left:261px;top:69px;width:1px;height:9px;background:#a0a0a0"></div>
<svg style="left:254px;top:71px" width="7" height="5" viewBox="0 0 7 5" shape-rendering="crispEdges"><path d="M0 0h2v1h1v1h1v-1h1v-1h2v1h-1v1h-1v1h1v1h1v1h-2v-1h-1v-1h-1v1h-1v1h-2v-1h1v-1h1v-1h-1v-1h-1z" fill="#000"/></svg>
<div class="a" style="left:5px;top:82px;width:1px;height:701px;background:#fff"></div>
<div class="a" style="left:5px;top:82px;width:254px;height:1px;background:#fff"></div>
<div class="a" style="left:257px;top:82px;width:4px;height:701px;background:#fff"></div>
<div class="a" style="left:261px;top:81px;width:1px;height:702px;background:#000"></div>
<div class="a" style="left:6px;top:83px;width:251px;height:1px;background:#a0a0a0"></div>
<div class="a" style="left:6px;top:83px;width:1px;height:700px;background:#a0a0a0"></div>
<div class="a" style="left:7px;top:84px;width:249px;height:1px;background:#000"></div>
<div class="a" style="left:7px;top:84px;width:1px;height:699px;background:#000"></div>
<div class="a" style="left:256px;top:84px;width:1px;height:699px;background:#a0a0a0"></div>
<div class="a" style="left:8px;top:85px;width:248px;height:22px;background:#f0f0f0"></div>
<div class="a" style="left:8px;top:85px;width:248px;height:4px;background:#fff"></div>
<div class="a" style="left:9px;top:89px;width:246px;height:1px;background:#a0a0a0"></div>
<div class="a" style="left:8px;top:85px;width:1px;height:20px;background:#fff"></div>
<div class="a" style="left:8px;top:104px;width:248px;height:1px;background:#fff"></div>
<div class="a" style="left:8px;top:105px;width:248px;height:2px;background:#8c8c8c"></div>
<div class="a" style="left:8px;top:107px;width:248px;height:676px;background:#fff"></div>
<div class="a" style="left:8px;top:107px;width:2px;height:676px;background:#8c8c8c"></div>
<div class="a" style="left:238px;top:107px;width:17px;height:676px;background:linear-gradient(90deg,#e8e8e8,#f0f0f0 30%,#f4f4f4 70%,#ececec)"></div>
<svg style="left:243px;top:113px" width="8" height="5" viewBox="0 0 8 5"><path d="M0 4.5l3.5-4l3.5 4z" fill="#505050"/></svg>
<div class="a" style="left:238px;top:298px;width:16px;height:326px;border:1px solid #9a9a9a;border-radius:2px;background:linear-gradient(90deg,#f2f2f2 0,#ececec 45%,#d6d6d6 55%,#d0d0d0 100%)"></div>
<div class="a" style="left:242px;top:457px;width:7px;height:1px;background:#444"></div>
<div class="a" style="left:242px;top:458px;width:7px;height:1px;background:#fff"></div>
<div class="a" style="left:242px;top:460px;width:7px;height:1px;background:#444"></div>
<div class="a" style="left:242px;top:461px;width:7px;height:1px;background:#fff"></div>
<div class="a" style="left:242px;top:463px;width:7px;height:1px;background:#444"></div>
<div class="a" style="left:242px;top:464px;width:7px;height:1px;background:#fff"></div>
<div class="a" style="left:270px;top:66px;width:1px;height:717px;background:#fff"></div>
<div class="a" style="left:10px;top:107px;width:228px;height:676px;overflow:hidden">
<div class="a" style="left:95px;top:400px;width:140px;height:19px;background:#3596f8"></div>
<svg style="left:95px;top:400px" width="140" height="19" viewBox="0 0 140 19" shape-rendering="crispEdges"><path d="M0 0.5H140M0.5 0V19M0 18.5H140" stroke="#000" stroke-dasharray="1 1" fill="none"/></svg>
<svg style="left:0;top:0;overflow:hidden" width="228" height="676" viewBox="10 107 228 676" shape-rendering="crispEdges"><path d="M18.5 101V157" stroke="#808080" stroke-dasharray="1 1" fill="none"/><path d="M37.5 163V783" stroke="#808080" stroke-dasharray="1 1" fill="none"/><path d="M56.5 283V783" stroke="#808080" stroke-dasharray="1 1" fill="none"/><path d="M75.5 303V783" stroke="#808080" stroke-dasharray="1 1" fill="none"/><rect x="14.5" y="113.5" width="8" height="8" fill="#fff" stroke="#8c8c8c"/><rect x="16" y="117" width="5" height="1" fill="#000"/><rect x="18" y="115" width="1" height="5" fill="#000"/><path d="M23 117.5H29" stroke="#808080" stroke-dasharray="1 1" fill="none"/><path d="M29.5 123V113.5h1v-1l1-1h5l1 1v1h5.5v9.5z" fill="#fffad0" stroke="#a8a070"/><rect x="31" y="112" width="5" height="2" fill="#e8e090"/><rect x="38" y="114" width="4" height="1" fill="#e8e090"/><rect x="43" y="114" width="1" height="10" fill="#000"/><rect x="30" y="123" width="14" height="1" fill="#000"/><rect x="32" y="115" width="9" height="7" fill="#000080"/><rect x="34" y="116" width="5" height="5" fill="#fff"/><rect x="35" y="117" width="4" height="3" fill="#c0c0cc"/><rect x="31" y="116" width="1" height="2" fill="#000080"/><rect x="31" y="119" width="1" height="2" fill="#000080"/><rect x="41" y="118" width="2" height="2" fill="#000080"/><path d="M19 137.5H29" stroke="#808080" stroke-dasharray="1 1" fill="none"/><path d="M29 143L32 138V143z" fill="#800080"/><rect x="29" y="142" width="1" height="1" fill="#000"/><rect x="30" y="140" width="1" height="1" fill="#000"/><rect x="31" y="139" width="1" height="1" fill="#000"/><rect x="32" y="138" width="1" height="1" fill="#000"/><rect x="32" y="134" width="3" height="9" fill="#000"/><rect x="33" y="135" width="1" height="7" fill="#a898b8"/><rect x="35" y="131" width="3" height="12" fill="#000"/><rect x="36" y="134" width="1" height="8" fill="#d0d0d0"/><rect x="35" y="132" width="1" height="1" fill="#e0e0e0"/><rect x="37" y="133" width="1" height="1" fill="#e0e0e0"/><rect x="38" y="134" width="2" height="9" fill="#6a1030"/><path d="M39 143V133L44 130V143z" fill="#0010f0"/><rect x="44" y="130" width="1" height="13" fill="#000050"/><path d="M39 133L43 130.5" stroke="#000050" shape-rendering="auto"/><rect x="30" y="143" width="15" height="1" fill="#000"/><rect x="14.5" y="153.5" width="8" height="8" fill="#fff" stroke="#8c8c8c"/><rect x="16" y="157" width="5" height="1" fill="#000"/><path d="M23 157.5H29" stroke="#808080" stroke-dasharray="1 1" fill="none"/><rect x="31" y="153" width="4" height="10" fill="#f4f000"/><rect x="32" y="152" width="2" height="1" fill="#909000"/><rect x="33" y="151" width="2" height="1" fill="#808000"/><rect x="32" y="159" width="2" height="1" fill="#706000"/><rect x="35" y="152" width="2" height="10" fill="#88a000"/><rect x="37" y="151" width="1" height="11" fill="#308838"/><rect x="36" y="151" width="2" height="1" fill="#607000"/><rect x="37" y="150" width="1" height="1" fill="#505000"/><rect x="38" y="152" width="2" height="10" fill="#c8d0e0"/><rect x="38" y="159" width="2" height="1" fill="#000"/><rect x="38" y="151" width="1" height="1" fill="#000"/><rect x="39" y="150" width="1" height="1" fill="#000"/><path d="M40 152L44 150V160L41 162H40z" fill="#000088"/><path d="M40.5 152.5V162" stroke="#4070c8"/><rect x="33.5" y="173.5" width="8" height="8" fill="#fff" stroke="#8c8c8c"/><rect x="35" y="177" width="5" height="1" fill="#000"/><rect x="37" y="175" width="1" height="5" fill="#000"/><path d="M43 177.5H48" stroke="#808080" stroke-dasharray="1 1" fill="none"/><path d="M49.5 175L57 170.5L64.5 176.5V178.5L56.5 183.5L49.5 178.5z" fill="#000" stroke="#000" stroke-width="1" shape-rendering="auto"/><path d="M50.8 175.2L57 171.6L63 176.4L56.4 180.6z" fill="#22dd22" shape-rendering="auto"/><path d="M50.5 176.5V178L56 182V181z" fill="#10a010" shape-rendering="auto"/><path d="M57 181.2L63.5 177.2V178.2L57 182.2z" fill="#e8e8e8" shape-rendering="auto"/><path d="M51.5 175.5L56.5 172.2" stroke="#b0f0b0" stroke-width=".8" stroke-dasharray="1.2 1" shape-rendering="auto"/><rect x="33.5" y="193.5" width="8" height="8" fill="#fff" stroke="#8c8c8c"/><rect x="35" y="197" width="5" height="1" fill="#000"/><rect x="37" y="195" width="1" height="5" fill="#000"/><path d="M43 197.5H48" stroke="#808080" stroke-dasharray="1 1" fill="none"/><path d="M49.5 195L57 190.5L64.5 196.5V198.5L56.5 203.5L49.5 198.5z" fill="#000" stroke="#000" stroke-width="1" shape-rendering="auto"/><path d="M50.8 195.2L57 191.6L63 196.4L56.4 200.6z" fill="#22dd22" shape-rendering="auto"/><path d="M50.5 196.5V198L56 202V201z" fill="#10a010" shape-rendering="auto"/><path d="M57 201.2L63.5 197.2V198.2L57 202.2z" fill="#e8e8e8" shape-rendering="auto"/><path d="M51.5 195.5L56.5 192.2" stroke="#b0f0b0" stroke-width=".8" stroke-dasharray="1.2 1" shape-rendering="auto"/><rect x="33.5" y="213.5" width="8" height="8" fill="#fff" stroke="#8c8c8c"/><rect x="35" y="217" width="5" height="1" fill="#000"/><rect x="37" y="215" width="1" height="5" fill="#000"/><path d="M43 217.5H48" stroke="#808080" stroke-dasharray="1 1" fill="none"/><path d="M49.5 215L57 210.5L64.5 216.5V218.5L56.5 223.5L49.5 218.5z" fill="#000" stroke="#000" stroke-width="1" shape-rendering="auto"/><path d="M50.8 215.2L57 211.6L63 216.4L56.4 220.6z" fill="#22dd22" shape-rendering="auto"/><path d="M50.5 216.5V218L56 222V221z" fill="#10a010" shape-rendering="auto"/><path d="M57 221.2L63.5 217.2V218.2L57 222.2z" fill="#e8e8e8" shape-rendering="auto"/><path d="M51.5 215.5L56.5 212.2" stroke="#b0f0b0" stroke-width=".8" stroke-dasharray="1.2 1" shape-rendering="auto"/><rect x="33.5" y="233.5" width="8" height="8" fill="#fff" stroke="#8c8c8c"/><rect x="35" y="237" width="5" height="1" fill="#000"/><rect x="37" y="235" width="1" height="5" fill="#000"/><path d="M43 237.5H48" stroke="#808080" stroke-dasharray="1 1" fill="none"/><path d="M49.5 235L57 230.5L64.5 236.5V238.5L56.5 243.5L49.5 238.5z" fill="#000" stroke="#000" stroke-width="1" shape-rendering="auto"/><path d="M50.8 235.2L57 231.6L63 236.4L56.4 240.6z" fill="#22dd22" shape-rendering="auto"/><path d="M50.5 236.5V238L56 242V241z" fill="#10a010" shape-rendering="auto"/><path d="M57 241.2L63.5 237.2V238.2L57 242.2z" fill="#e8e8e8" shape-rendering="auto"/><path d="M51.5 235.5L56.5 232.2" stroke="#b0f0b0" stroke-width=".8" stroke-dasharray="1.2 1" shape-rendering="auto"/><rect x="33.5" y="253.5" width="8" height="8" fill="#fff" stroke="#8c8c8c"/><rect x="35" y="257" width="5" height="1" fill="#000"/><rect x="37" y="255" width="1" height="5" fill="#000"/><path d="M43 257.5H48" stroke="#808080" stroke-dasharray="1 1" fill="none"/><path d="M49.5 255L57 250.5L64.5 256.5V258.5L56.5 263.5L49.5 258.5z" fill="#000" stroke="#000" stroke-width="1" shape-rendering="auto"/><path d="M50.8 255.2L57 251.6L63 256.4L56.4 260.6z" fill="#22dd22" shape-rendering="auto"/><path d="M50.5 256.5V258L56 262V261z" fill="#10a010" shape-rendering="auto"/><path d="M57 261.2L63.5 257.2V258.2L57 262.2z" fill="#e8e8e8" shape-rendering="auto"/><path d="M51.5 255.5L56.5 252.2" stroke="#b0f0b0" stroke-width=".8" stroke-dasharray="1.2 1" shape-rendering="auto"/><rect x="33.5" y="273.5" width="8" height="8" fill="#fff" stroke="#8c8c8c"/><rect x="35" y="277" width="5" height="1" fill="#000"/><path d="M43 277.5H48" stroke="#808080" stroke-dasharray="1 1" fill="none"/><path d="M49.5 275L57 270.5L64.5 276.5V278.5L56.5 283.5L49.5 278.5z" fill="#000" stroke="#000" stroke-width="1" shape-rendering="auto"/><path d="M50.8 275.2L57 271.6L63 276.4L56.4 280.6z" fill="#22dd22" shape-rendering="auto"/><path d="M50.5 276.5V278L56 282V281z" fill="#10a010" shape-rendering="auto"/><path d="M57 281.2L63.5 277.2V278.2L57 282.2z" fill="#e8e8e8" shape-rendering="auto"/><path d="M51.5 275.5L56.5 272.2" stroke="#b0f0b0" stroke-width=".8" stroke-dasharray="1.2 1" shape-rendering="auto"/><rect x="52.5" y="293.5" width="8" height="8" fill="#fff" stroke="#8c8c8c"/><rect x="54" y="297" width="5" height="1" fill="#000"/><path d="M61 297.5H67" stroke="#808080" stroke-dasharray="1 1" fill="none"/><path d="M67.5 303V293.5h1v-1l1-1h5l1 1v1h5.5v9.5z" fill="#fffad0" stroke="#a8a070"/><rect x="69" y="292" width="5" height="2" fill="#e8e090"/><rect x="76" y="294" width="4" height="1" fill="#e8e090"/><rect x="81" y="294" width="1" height="10" fill="#000"/><rect x="68" y="303" width="14" height="1" fill="#000"/><rect x="70" y="295" width="9" height="7" fill="#000080"/><rect x="72" y="296" width="5" height="5" fill="#fff"/><rect x="73" y="297" width="4" height="3" fill="#c0c0cc"/><rect x="69" y="296" width="1" height="2" fill="#000080"/><rect x="69" y="299" width="1" height="2" fill="#000080"/><rect x="79" y="298" width="2" height="2" fill="#000080"/><path d="M77 317.5H86" stroke="#808080" stroke-dasharray="1 1" fill="none"/><rect x="88" y="312" width="12" height="10" fill="#000070"/><rect x="89" y="313" width="10" height="8" fill="#fff"/><rect x="90" y="314" width="9" height="7" fill="#a8a8c8"/><rect x="91" y="315" width="7" height="5" fill="#c4c4d4"/><rect x="86" y="314" width="2" height="2" fill="#000070"/><rect x="86" y="318" width="2" height="2" fill="#000070"/><rect x="100" y="316" width="2" height="2" fill="#000070"/><path d="M77 337.5H86" stroke="#808080" stroke-dasharray="1 1" fill="none"/><rect x="88" y="332" width="12" height="10" fill="#000070"/><rect x="89" y="333" width="10" height="8" fill="#fff"/><rect x="90" y="334" width="9" height="7" fill="#a8a8c8"/><rect x="91" y="335" width="7" height="5" fill="#c4c4d4"/><rect x="86" y="334" width="2" height="2" fill="#000070"/><rect x="86" y="338" width="2" height="2" fill="#000070"/><rect x="100" y="336" width="2" height="2" fill="#000070"/><path d="M77 357.5H86" stroke="#808080" stroke-dasharray="1 1" fill="none"/><rect x="88" y="352" width="12" height="10" fill="#000070"/><rect x="89" y="353" width="10" height="8" fill="#fff"/><rect x="90" y="354" width="9" height="7" fill="#a8a8c8"/><rect x="91" y="355" width="7" height="5" fill="#c4c4d4"/><rect x="86" y="354" width="2" height="2" fill="#000070"/><rect x="86" y="358" width="2" height="2" fill="#000070"/><rect x="100" y="356" width="2" height="2" fill="#000070"/><path d="M77 377.5H86" stroke="#808080" stroke-dasharray="1 1" fill="none"/><rect x="88" y="372" width="12" height="10" fill="#000070"/><rect x="89" y="373" width="10" height="8" fill="#fff"/><rect x="90" y="374" width="9" height="7" fill="#a8a8c8"/><rect x="91" y="375" width="7" height="5" fill="#c4c4d4"/><rect x="86" y="374" width="2" height="2" fill="#000070"/><rect x="86" y="378" width="2" height="2" fill="#000070"/><rect x="100" y="376" width="2" height="2" fill="#000070"/><path d="M77 397.5H86" stroke="#808080" stroke-dasharray="1 1" fill="none"/><rect x="88" y="392" width="12" height="10" fill="#000070"/><rect x="89" y="393" width="10" height="8" fill="#fff"/><rect x="90" y="394" width="9" height="7" fill="#a8a8c8"/><rect x="91" y="395" width="7" height="5" fill="#c4c4d4"/><rect x="86" y="394" width="2" height="2" fill="#000070"/><rect x="86" y="398" width="2" height="2" fill="#000070"/><rect x="100" y="396" width="2" height="2" fill="#000070"/><path d="M77 417.5H86" stroke="#808080" stroke-dasharray="1 1" fill="none"/><rect x="88" y="412" width="12" height="10" fill="#000070"/><rect x="89" y="413" width="10" height="8" fill="#fff"/><rect x="90" y="414" width="9" height="7" fill="#a8a8c8"/><rect x="91" y="415" width="7" height="5" fill="#c4c4d4"/><rect x="86" y="414" width="2" height="2" fill="#000070"/><rect x="86" y="418" width="2" height="2" fill="#000070"/><rect x="100" y="416" width="2" height="2" fill="#000070"/><path d="M77 437.5H86" stroke="#808080" stroke-dasharray="1 1" fill="none"/><rect x="88" y="432" width="12" height="10" fill="#000070"/><rect x="89" y="433" width="10" height="8" fill="#fff"/><rect x="90" y="434" width="9" height="7" fill="#a8a8c8"/><rect x="91" y="435" width="7" height="5" fill="#c4c4d4"/><rect x="86" y="434" width="2" height="2" fill="#000070"/><rect x="86" y="438" width="2" height="2" fill="#000070"/><rect x="100" y="436" width="2" height="2" fill="#000070"/><path d="M77 457.5H86" stroke="#808080" stroke-dasharray="1 1" fill="none"/><rect x="88" y="452" width="12" height="10" fill="#000070"/><rect x="89" y="453" width="10" height="8" fill="#fff"/><rect x="90" y="454" width="9" height="7" fill="#a8a8c8"/><rect x="91" y="455" width="7" height="5" fill="#c4c4d4"/><rect x="86" y="454" width="2" height="2" fill="#000070"/><rect x="86" y="458" width="2" height="2" fill="#000070"/><rect x="100" y="456" width="2" height="2" fill="#000070"/><path d="M77 477.5H86" stroke="#808080" stroke-dasharray="1 1" fill="none"/><rect x="88" y="472" width="12" height="10" fill="#000070"/><rect x="89" y="473" width="10" height="8" fill="#fff"/><rect x="90" y="474" width="9" height="7" fill="#a8a8c8"/><rect x="91" y="475" width="7" height="5" fill="#c4c4d4"/><rect x="86" y="474" width="2" height="2" fill="#000070"/><rect x="86" y="478" width="2" height="2" fill="#000070"/><rect x="100" y="476" width="2" height="2" fill="#000070"/><path d="M77 497.5H86" stroke="#808080" stroke-dasharray="1 1" fill="none"/><rect x="88" y="492" width="12" height="10" fill="#000070"/><rect x="89" y="493" width="10" height="8" fill="#fff"/><rect x="90" y="494" width="9" height="7" fill="#a8a8c8"/><rect x="91" y="495" width="7" height="5" fill="#c4c4d4"/><rect x="86" y="494" width="2" height="2" fill="#000070"/><rect x="86" y="498" width="2" height="2" fill="#000070"/><rect x="100" y="496" width="2" height="2" fill="#000070"/><path d="M77 517.5H86" stroke="#808080" stroke-dasharray="1 1" fill="none"/><rect x="88" y="512" width="12" height="10" fill="#000070"/><rect x="89" y="513" width="10" height="8" fill="#fff"/><rect x="90" y="514" width="9" height="7" fill="#a8a8c8"/><rect x="91" y="515" width="7" height="5" fill="#c4c4d4"/><rect x="86" y="514" width="2" height="2" fill="#000070"/><rect x="86" y="518" width="2" height="2" fill="#000070"/><rect x="100" y="516" width="2" height="2" fill="#000070"/><path d="M77 537.5H86" stroke="#808080" stroke-dasharray="1 1" fill="none"/><rect x="88" y="532" width="12" height="10" fill="#000070"/><rect x="89" y="533" width="10" height="8" fill="#fff"/><rect x="90" y="534" width="9" height="7" fill="#a8a8c8"/><rect x="91" y="535" width="7" height="5" fill="#c4c4d4"/><rect x="86" y="534" width="2" height="2" fill="#000070"/><rect x="86" y="538" width="2" height="2" fill="#000070"/><rect x="100" y="536" width="2" height="2" fill="#000070"/><path d="M77 557.5H86" stroke="#808080" stroke-dasharray="1 1" fill="none"/><rect x="88" y="552" width="12" height="10" fill="#000070"/><rect x="89" y="553" width="10" height="8" fill="#fff"/><rect x="90" y="554" width="9" height="7" fill="#a8a8c8"/><rect x="91" y="555" width="7" height="5" fill="#c4c4d4"/><rect x="86" y="554" width="2" height="2" fill="#000070"/><rect x="86" y="558" width="2" height="2" fill="#000070"/><rect x="100" y="556" width="2" height="2" fill="#000070"/><path d="M77 577.5H86" stroke="#808080" stroke-dasharray="1 1" fill="none"/><rect x="88" y="572" width="12" height="10" fill="#000070"/><rect x="89" y="573" width="10" height="8" fill="#fff"/><rect x="90" y="574" width="9" height="7" fill="#a8a8c8"/><rect x="91" y="575" width="7" height="5" fill="#c4c4d4"/><rect x="86" y="574" width="2" height="2" fill="#000070"/><rect x="86" y="578" width="2" height="2" fill="#000070"/><rect x="100" y="576" width="2" height="2" fill="#000070"/><path d="M77 597.5H86" stroke="#808080" stroke-dasharray="1 1" fill="none"/><rect x="88" y="592" width="12" height="10" fill="#000070"/><rect x="89" y="593" width="10" height="8" fill="#fff"/><rect x="90" y="594" width="9" height="7" fill="#a8a8c8"/><rect x="91" y="595" width="7" height="5" fill="#c4c4d4"/><rect x="86" y="594" width="2" height="2" fill="#000070"/><rect x="86" y="598" width="2" height="2" fill="#000070"/><rect x="100" y="596" width="2" height="2" fill="#000070"/><path d="M77 617.5H86" stroke="#808080" stroke-dasharray="1 1" fill="none"/><rect x="88" y="612" width="12" height="10" fill="#000070"/><rect x="89" y="613" width="10" height="8" fill="#fff"/><rect x="90" y="614" width="9" height="7" fill="#a8a8c8"/><rect x="91" y="615" width="7" height="5" fill="#c4c4d4"/><rect x="86" y="614" width="2" height="2" fill="#000070"/><rect x="86" y="618" width="2" height="2" fill="#000070"/><rect x="100" y="616" width="2" height="2" fill="#000070"/><path d="M77 637.5H86" stroke="#808080" stroke-dasharray="1 1" fill="none"/><rect x="88" y="632" width="12" height="10" fill="#000070"/><rect x="89" y="633" width="10" height="8" fill="#fff"/><rect x="90" y="634" width="9" height="7" fill="#a8a8c8"/><rect x="91" y="635" width="7" height="5" fill="#c4c4d4"/><rect x="86" y="634" width="2" height="2" fill="#000070"/><rect x="86" y="638" width="2" height="2" fill="#000070"/><rect x="100" y="636" width="2" height="2" fill="#000070"/><path d="M77 657.5H86" stroke="#808080" stroke-dasharray="1 1" fill="none"/><rect x="88" y="652" width="12" height="10" fill="#000070"/><rect x="89" y="653" width="10" height="8" fill="#fff"/><rect x="90" y="654" width="9" height="7" fill="#a8a8c8"/><rect x="91" y="655" width="7" height="5" fill="#c4c4d4"/><rect x="86" y="654" width="2" height="2" fill="#000070"/><rect x="86" y="658" width="2" height="2" fill="#000070"/><rect x="100" y="656" width="2" height="2" fill="#000070"/><path d="M77 677.5H86" stroke="#808080" stroke-dasharray="1 1" fill="none"/><rect x="88" y="672" width="12" height="10" fill="#000070"/><rect x="89" y="673" width="10" height="8" fill="#fff"/><rect x="90" y="674" width="9" height="7" fill="#a8a8c8"/><rect x="91" y="675" width="7" height="5" fill="#c4c4d4"/><rect x="86" y="674" width="2" height="2" fill="#000070"/><rect x="86" y="678" width="2" height="2" fill="#000070"/><rect x="100" y="676" width="2" height="2" fill="#000070"/><path d="M77 697.5H86" stroke="#808080" stroke-dasharray="1 1" fill="none"/><rect x="88" y="692" width="12" height="10" fill="#000070"/><rect x="89" y="693" width="10" height="8" fill="#fff"/><rect x="90" y="694" width="9" height="7" fill="#a8a8c8"/><rect x="91" y="695" width="7" height="5" fill="#c4c4d4"/><rect x="86" y="694" width="2" height="2" fill="#000070"/><rect x="86" y="698" width="2" height="2" fill="#000070"/><rect x="100" y="696" width="2" height="2" fill="#000070"/><path d="M77 717.5H86" stroke="#808080" stroke-dasharray="1 1" fill="none"/><rect x="88" y="712" width="12" height="10" fill="#000070"/><rect x="89" y="713" width="10" height="8" fill="#fff"/><rect x="90" y="714" width="9" height="7" fill="#a8a8c8"/><rect x="91" y="715" width="7" height="5" fill="#c4c4d4"/><rect x="86" y="714" width="2" height="2" fill="#000070"/><rect x="86" y="718" width="2" height="2" fill="#000070"/><rect x="100" y="716" width="2" height="2" fill="#000070"/><path d="M77 737.5H86" stroke="#808080" stroke-dasharray="1 1" fill="none"/><rect x="88" y="732" width="12" height="10" fill="#000070"/><rect x="89" y="733" width="10" height="8" fill="#fff"/><rect x="90" y="734" width="9" height="7" fill="#a8a8c8"/><rect x="91" y="735" width="7" height="5" fill="#c4c4d4"/><rect x="86" y="734" width="2" height="2" fill="#000070"/><rect x="86" y="738" width="2" height="2" fill="#000070"/><rect x="100" y="736" width="2" height="2" fill="#000070"/><path d="M77 757.5H86" stroke="#808080" stroke-dasharray="1 1" fill="none"/><rect x="88" y="752" width="12" height="10" fill="#000070"/><rect x="89" y="753" width="10" height="8" fill="#fff"/><rect x="90" y="754" width="9" height="7" fill="#a8a8c8"/><rect x="91" y="755" width="7" height="5" fill="#c4c4d4"/><rect x="86" y="754" width="2" height="2" fill="#000070"/><rect x="86" y="758" width="2" height="2" fill="#000070"/><rect x="100" y="756" width="2" height="2" fill="#000070"/><path d="M77 777.5H86" stroke="#808080" stroke-dasharray="1 1" fill="none"/><rect x="88" y="772" width="12" height="10" fill="#000070"/><rect x="89" y="773" width="10" height="8" fill="#fff"/><rect x="90" y="774" width="9" height="7" fill="#a8a8c8"/><rect x="91" y="775" width="7" height="5" fill="#c4c4d4"/><rect x="86" y="774" width="2" height="2" fill="#000070"/><rect x="86" y="778" width="2" height="2" fill="#000070"/><rect x="100" y="776" width="2" height="2" fill="#000070"/></svg>
<div class="t" style="left:40px;top:0px;line-height:20px;letter-spacing:0.127px;color:#202020">SFC blocks</div>
<div class="t" style="left:40px;top:20px;line-height:20px;letter-spacing:0.436px;color:#202020">Multiple instances</div>
<div class="t" style="left:40px;top:40px;line-height:20px;letter-spacing:0.371px;color:#202020">Libraries</div>
<div class="t" style="left:59px;top:60px;line-height:20px;letter-spacing:0.647px;color:#202020">stdlibs</div>
<div class="t" style="left:59px;top:80px;line-height:20px;letter-spacing:0.525px;color:#202020">Standard Library</div>
<div class="t" style="left:59px;top:100px;line-height:20px;letter-spacing:0.325px;color:#202020">Redundant IO CGP V40</div>
<div class="t" style="left:59px;top:120px;line-height:20px;letter-spacing:0.455px;color:#202020">Redundant IO MGP V32</div>
<div class="t" style="left:59px;top:140px;line-height:20px;letter-spacing:0.325px;color:#202020">Redundant IO CGP V52</div>
<div class="t" style="left:59px;top:160px;line-height:20px;letter-spacing:-0.238px;color:#202020">SIMATIC_NET_CP</div>
<div class="t" style="left:78px;top:180px;line-height:20px;letter-spacing:0.117px;color:#202020">CP 300</div>
<div class="t" style="left:97px;top:200px;line-height:20px;letter-spacing:-0.358px;color:#202020">FB2</div>
<div class="t" style="left:130px;top:200px;line-height:20px;letter-spacing:0.325px;color:#202020">IDENT</div>
<div class="t" style="left:179.3px;top:200px;line-height:20px;letter-spacing:-0.355px;color:#202020">CP_300</div>
<div class="t" style="left:97px;top:220px;line-height:20px;letter-spacing:-0.358px;color:#202020">FB3</div>
<div class="t" style="left:130px;top:220px;line-height:20px;letter-spacing:-0.215px;color:#202020">READ</div>
<div class="t" style="left:174.7px;top:220px;line-height:20px;letter-spacing:-0.355px;color:#202020">CP_300</div>
<div class="t" style="left:97px;top:240px;line-height:20px;letter-spacing:-0.358px;color:#202020">FB4</div>
<div class="t" style="left:130px;top:240px;line-height:20px;letter-spacing:-0.479px;color:#202020">REPORT</div>
<div class="t" style="left:189.4px;top:240px;line-height:20px;letter-spacing:-0.355px;color:#202020">CP_300</div>
<div class="t" style="left:97px;top:260px;line-height:20px;letter-spacing:-0.358px;color:#202020">FB5</div>
<div class="t" style="left:130px;top:260px;line-height:20px;letter-spacing:-0.133px;color:#202020">STATUS</div>
<div class="t" style="left:186.9px;top:260px;line-height:20px;letter-spacing:-0.355px;color:#202020">CP_300</div>
<div class="t" style="left:97px;top:280px;line-height:20px;letter-spacing:-0.358px;color:#202020">FB6</div>
<div class="t" style="left:130px;top:280px;line-height:20px;letter-spacing:-0.293px;color:#202020">WRITE</div>
<div class="t" style="left:180.5px;top:280px;line-height:20px;letter-spacing:-0.355px;color:#202020">CP_300</div>
<div class="t" style="left:97px;top:300px;line-height:20px;letter-spacing:-0.358px;color:#202020">FB8</div>
<div class="t" style="left:130px;top:300px;line-height:20px;letter-spacing:-0.129px;color:#202020">USEND</div>
<div class="t" style="left:184.5px;top:300px;line-height:20px;letter-spacing:-0.3px;color:#202020">CP300PBK</div>
<div class="t" style="left:97px;top:320px;line-height:20px;letter-spacing:-0.358px;color:#202020">FB9</div>
<div class="t" style="left:130px;top:320px;line-height:20px;letter-spacing:-0.205px;color:#202020">URCV</div>
<div class="t" style="left:175.4px;top:320px;line-height:20px;letter-spacing:-0.3px;color:#202020">CP300PBK</div>
<div class="t" style="left:97px;top:340px;line-height:20px;letter-spacing:-0.196px;color:#202020">FB10</div>
<div class="t" style="left:137.5px;top:340px;line-height:20px;letter-spacing:-0.341px;color:#202020">AG_CNTEX</div>
<div class="t" style="left:211px;top:340px;line-height:20px;letter-spacing:-0.355px;color:#202020">CP_300</div>
<div class="t" style="left:97px;top:360px;line-height:20px;letter-spacing:-0.196px;color:#202020">FB12</div>
<div class="t" style="left:137.5px;top:360px;line-height:20px;letter-spacing:-0.111px;color:#202020">BSEND</div>
<div class="t" style="left:190.4px;top:360px;line-height:20px;letter-spacing:-0.3px;color:#202020">CP300PBK</div>
<div class="t" style="left:97px;top:380px;line-height:20px;letter-spacing:-0.196px;color:#202020">FB13</div>
<div class="t" style="left:137.5px;top:380px;line-height:20px;letter-spacing:-0.415px;color:#202020">BRCV</div>
<div class="t" style="left:181.6px;top:380px;line-height:20px;letter-spacing:-0.3px;color:#202020">CP300PBK</div>
<div class="t" style="left:97px;top:400px;line-height:20px;letter-spacing:-0.196px;color:#fff">FB14</div>
<div class="t" style="left:137.5px;top:400px;line-height:20px;letter-spacing:-0.736px;color:#fff">GET</div>
<div class="t" style="left:172.7px;top:400px;line-height:20px;letter-spacing:-0.3px;color:#fff">CP300PBK</div>
<div class="t" style="left:97px;top:420px;line-height:20px;letter-spacing:-0.196px;color:#202020">FB15</div>
<div class="t" style="left:137.5px;top:420px;line-height:20px;letter-spacing:-0.4px;color:#202020">PUT</div>
<div class="t" style="left:172.7px;top:420px;line-height:20px;letter-spacing:-0.3px;color:#202020">CP300PBK</div>
<div class="t" style="left:97px;top:440px;line-height:20px;letter-spacing:-0.196px;color:#202020">FB40</div>
<div class="t" style="left:137.5px;top:440px;line-height:20px;letter-spacing:-0.412px;color:#202020">FTP_CMD</div>
<div class="t" style="left:203.7px;top:440px;line-height:20px;letter-spacing:-0.355px;color:#202020">CP_300</div>
<div class="t" style="left:97px;top:460px;line-height:20px;letter-spacing:-0.196px;color:#202020">FB52</div>
<div class="t" style="left:137.5px;top:460px;line-height:20px;letter-spacing:-0.35px;color:#202020">PNIO_RW_REC</div>
<div class="t" style="left:235px;top:460px;line-height:20px;letter-spacing:-0.355px;color:#202020">CP_300</div>
<div class="t" style="left:97px;top:480px;line-height:20px;letter-spacing:-0.196px;color:#202020">FB53</div>
<div class="t" style="left:137.5px;top:480px;line-height:20px;letter-spacing:-0.557px;color:#202020">DS3_WRITE_CP</div>
<div class="t" style="left:237px;top:480px;line-height:20px;letter-spacing:-0.355px;color:#202020">CP_300</div>
<div class="t" style="left:97px;top:500px;line-height:20px;letter-spacing:-0.196px;color:#202020">FB54</div>
<div class="t" style="left:137.5px;top:500px;line-height:20px;letter-spacing:0.082px;color:#202020">PNIO_ALARM</div>
<div class="t" style="left:230px;top:500px;line-height:20px;letter-spacing:-0.355px;color:#202020">CP_300</div>
<div class="t" style="left:97px;top:520px;line-height:20px;letter-spacing:-0.196px;color:#202020">FB55</div>
<div class="t" style="left:137.5px;top:520px;line-height:20px;letter-spacing:-0.211px;color:#202020">IP_CONFIG</div>
<div class="t" style="left:212.5px;top:520px;line-height:20px;letter-spacing:-0.355px;color:#202020">CP_300</div>
<div class="t" style="left:97px;top:540px;line-height:20px;letter-spacing:-0.196px;color:#202020">FB56</div>
<div class="t" style="left:137.5px;top:540px;line-height:20px;letter-spacing:-0.17px;color:#202020">LOGICAL_TRIGGER</div>
<div class="t" style="left:240px;top:540px;line-height:20px;letter-spacing:-0.355px;color:#202020">CP_300</div>
<div class="t" style="left:97px;top:560px;line-height:20px;letter-spacing:-0.196px;color:#202020">FB85</div>
<div class="t" style="left:137.5px;top:560px;line-height:20px;letter-spacing:-0.233px;color:#202020">PE_START_END_CP</div>
<div class="t" style="left:240px;top:560px;line-height:20px;letter-spacing:-0.355px;color:#202020">CP_300</div>
<div class="t" style="left:97px;top:580px;line-height:20px;letter-spacing:-0.196px;color:#202020">FB86</div>
<div class="t" style="left:137.5px;top:580px;line-height:20px;letter-spacing:-0.707px;color:#202020">PE_CMD_CP</div>
<div class="t" style="left:217.2px;top:580px;line-height:20px;letter-spacing:-0.355px;color:#202020">CP_300</div>
<div class="t" style="left:97px;top:600px;line-height:20px;letter-spacing:-0.196px;color:#202020">FB87</div>
<div class="t" style="left:137.5px;top:600px;line-height:20px;letter-spacing:-0.972px;color:#202020">PE_I_DEV_CP</div>
<div class="t" style="left:220.5px;top:600px;line-height:20px;letter-spacing:-0.355px;color:#202020">CP_300</div>
<div class="t" style="left:97px;top:620px;line-height:20px;letter-spacing:-0.686px;color:#202020">FC1</div>
<div class="t" style="left:130.5px;top:620px;line-height:20px;letter-spacing:-0.515px;color:#202020">DP_SEND</div>
<div class="t" style="left:196.1px;top:620px;line-height:20px;letter-spacing:-0.355px;color:#202020">CP_300</div>
<div class="t" style="left:97px;top:640px;line-height:20px;letter-spacing:-0.686px;color:#202020">FC2</div>
<div class="t" style="left:130.5px;top:640px;line-height:20px;letter-spacing:-0.781px;color:#202020">DP_RECV</div>
<div class="t" style="left:194.5px;top:640px;line-height:20px;letter-spacing:-0.355px;color:#202020">CP_300</div>
<div class="t" style="left:97px;top:660px;line-height:20px;letter-spacing:-0.686px;color:#202020">FC3</div>
<div class="t" style="left:130.5px;top:660px;line-height:20px;letter-spacing:-0.381px;color:#202020">DP_DIAG</div>
<div class="t" style="left:192.9px;top:660px;line-height:20px;letter-spacing:-0.355px;color:#202020">CP_300</div>
</div>
<div class="a" style="left:104px;top:526px;width:140px;height:20px;background:#ffffe1;border:1px solid #767676"></div>
<div class="t" style="left:107px;top:527px;line-height:19px;letter-spacing:-0.196px;color:#202020">FB15</div>
<div class="t" style="left:147.5px;top:527px;line-height:19px;letter-spacing:-0.4px;color:#202020">PUT</div>
<div class="t" style="left:182.7px;top:527px;line-height:19px;letter-spacing:-0.3px;color:#202020">CP300PBK</div>
<div class="a" style="left:274px;top:65px;width:435px;height:1px;background:#6e6e6e"></div>
<div class="a" style="left:276px;top:66px;width:433px;height:1px;background:#fff"></div>
<div class="a" style="left:274px;top:71px;width:435px;height:1px;background:#a0a0a0"></div>
<div class="a" style="left:275px;top:72px;width:434px;height:1px;background:#696969"></div>
<div class="a" style="left:274px;top:71px;width:1px;height:712px;background:#a0a0a0"></div>
<div class="a" style="left:275px;top:72px;width:1px;height:711px;background:#696969"></div>
<div class="a" style="left:276px;top:73px;width:433px;height:710px;background:#fff"></div>
<svg style="left:276px;top:73px;overflow:hidden" width="433" height="710" viewBox="276 73 433 710" shape-rendering="crispEdges"><rect x="292.5" y="67.5" width="8" height="8" fill="#fff" stroke="#000"/><rect x="294" y="71" width="5" height="1" fill="#000"/><text x="307" y="77" font-family="Liberation Mono" font-size="13" fill="#000" font-weight="bold" letter-spacing="0.3" xml:space="preserve">Network 1</text><text x="383" y="77" font-family="Liberation Mono" font-size="13" fill="#000" letter-spacing="-0.8" xml:space="preserve">: Title:</text><rect x="292" y="103" width="1" height="320" fill="#000"/><text x="473" y="119" font-family="Liberation Mono" font-size="13" fill="#000" letter-spacing="-0.8" xml:space="preserve">DB14</text><rect x="396.5" y="127.5" width="180" height="271" fill="none" stroke="#000"/><text x="454" y="141" font-family="Liberation Mono" font-size="13" fill="#767600" font-weight="bold" letter-spacing="-0.6" xml:space="preserve">FB14</text><text x="412.5" y="157" font-family="Liberation Mono" font-size="13" fill="#767600" letter-spacing="-0.8" xml:space="preserve">Read Data From a</text><text x="433" y="173" font-family="Liberation Mono" font-size="13" fill="#767600" letter-spacing="-0.8" xml:space="preserve">Remote CPU</text><text x="459.5" y="189" font-family="Liberation Mono" font-size="13" fill="#000" letter-spacing="-0.8" xml:space="preserve">GET</text><path d="M453.5 181.5l3-3.5M455.7 181.5l3-3.5" stroke="#000" stroke-width=".9" fill="none" shape-rendering="auto"/><path d="M482.0 181.5l3-3.5M484.2 181.5l3-3.5" stroke="#000" stroke-width=".9" fill="none" shape-rendering="auto"/><rect x="292" y="199" width="105" height="1" fill="#000"/><text x="398" y="203" font-family="Liberation Mono" font-size="13" fill="#000" letter-spacing="-0.8" xml:space="preserve">EN</text><rect x="577" y="199" width="105" height="1" fill="#000"/><text x="539" y="203" font-family="Liberation Mono" font-size="13" fill="#000" letter-spacing="-0.8" xml:space="preserve">ENO</text><rect x="388" y="231" width="9" height="1" fill="#000"/><text x="356" y="235" font-family="Liberation Mono" font-size="13" fill="#000" letter-spacing="-0.8" xml:space="preserve">M0.0</text><text x="398" y="235" font-family="Liberation Mono" font-size="13" fill="#000" letter-spacing="-0.8" xml:space="preserve">REQ</text><rect x="388" y="263" width="9" height="1" fill="#000"/><text x="342" y="267" font-family="Liberation Mono" font-size="13" fill="#000" letter-spacing="-0.8" xml:space="preserve">W#16#1</text><text x="398" y="267" font-family="Liberation Mono" font-size="13" fill="#000" letter-spacing="-0.8" xml:space="preserve">ID</text><rect x="388" y="327" width="9" height="1" fill="#000"/><text x="314" y="299" font-family="Liberation Mono" font-size="13" fill="#000" letter-spacing="-0.8" xml:space="preserve">P#DB1.DBX </text><text x="314" y="315" font-family="Liberation Mono" font-size="13" fill="#000" letter-spacing="-0.8" xml:space="preserve">30.0 BYTE </text><text x="377" y="331" font-family="Liberation Mono" font-size="13" fill="#000" letter-spacing="-0.8" xml:space="preserve">8</text><text x="398" y="331" font-family="Liberation Mono" font-size="13" fill="#000" letter-spacing="-0.8" xml:space="preserve">ADDR_1</text><rect x="388" y="391" width="9" height="1" fill="#000"/><text x="335" y="363" font-family="Liberation Mono" font-size="13" fill="#000" letter-spacing="-0.8" xml:space="preserve">P#DB20.</text><text x="328" y="379" font-family="Liberation Mono" font-size="13" fill="#000" letter-spacing="-0.8" xml:space="preserve">DBX30.0 </text><text x="342" y="395" font-family="Liberation Mono" font-size="13" fill="#000" letter-spacing="-0.8" xml:space="preserve">BYTE 8</text><text x="398" y="395" font-family="Liberation Mono" font-size="13" fill="#000" letter-spacing="-0.8" xml:space="preserve">RD_1</text><rect x="577" y="231" width="8" height="1" fill="#000"/><text x="539" y="235" font-family="Liberation Mono" font-size="13" fill="#000" letter-spacing="-0.8" xml:space="preserve">NDR</text><text x="585" y="235" font-family="Liberation Mono" font-size="13" fill="#000" letter-spacing="-0.8" xml:space="preserve">M10.0</text><rect x="577" y="263" width="8" height="1" fill="#000"/><text x="525" y="267" font-family="Liberation Mono" font-size="13" fill="#000" letter-spacing="-0.8" xml:space="preserve">ERROR</text><text x="585" y="267" font-family="Liberation Mono" font-size="13" fill="#000" letter-spacing="-0.8" xml:space="preserve">M10.1</text><rect x="577" y="295" width="8" height="1" fill="#000"/><text x="518" y="299" font-family="Liberation Mono" font-size="13" fill="#000" letter-spacing="-0.8" xml:space="preserve">STATUS</text><text x="585" y="299" font-family="Liberation Mono" font-size="13" fill="#000" letter-spacing="-0.8" xml:space="preserve">MW12</text><rect x="292.5" y="443.5" width="8" height="8" fill="#fff" stroke="#000"/><rect x="294" y="447" width="5" height="1" fill="#000"/><rect x="307" y="440" width="74" height="16" fill="#008080"/><path d="M306 439.5H382M306 456.5H382" stroke="#008080" stroke-dasharray="2 1"/><path d="M306.5 440V456" stroke="#008080" stroke-dasharray="1 1"/><path d="M381.5 440V457" stroke="#000" stroke-dasharray="2 1"/><text x="307" y="453" font-family="Liberation Mono" font-size="13" fill="#fff" font-weight="bold" letter-spacing="0.3" xml:space="preserve">Network 2</text><text x="383" y="453" font-family="Liberation Mono" font-size="13" fill="#000" letter-spacing="-0.8" xml:space="preserve">: Title:</text><rect x="292" y="479" width="1" height="320" fill="#000"/><text x="473" y="495" font-family="Liberation Mono" font-size="13" fill="#000" letter-spacing="-0.8" xml:space="preserve">DB15</text><rect x="396.5" y="503.5" width="180" height="271" fill="none" stroke="#000"/><text x="454" y="517" font-family="Liberation Mono" font-size="13" fill="#767600" font-weight="bold" letter-spacing="-0.6" xml:space="preserve">FB15</text><text x="417" y="533" font-family="Liberation Mono" font-size="13" fill="#767600" letter-spacing="-0.8" xml:space="preserve">Write Data to a</text><text x="433" y="549" font-family="Liberation Mono" font-size="13" fill="#767600" letter-spacing="-0.8" xml:space="preserve">Remote CPU</text><text x="459.5" y="565" font-family="Liberation Mono" font-size="13" fill="#000" letter-spacing="-0.8" xml:space="preserve">PUT</text><path d="M453.5 557.5l3-3.5M455.7 557.5l3-3.5" stroke="#000" stroke-width=".9" fill="none" shape-rendering="auto"/><path d="M482.0 557.5l3-3.5M484.2 557.5l3-3.5" stroke="#000" stroke-width=".9" fill="none" shape-rendering="auto"/><rect x="292" y="575" width="105" height="1" fill="#000"/><text x="398" y="579" font-family="Liberation Mono" font-size="13" fill="#000" letter-spacing="-0.8" xml:space="preserve">EN</text><rect x="577" y="575" width="105" height="1" fill="#000"/><text x="539" y="579" font-family="Liberation Mono" font-size="13" fill="#000" letter-spacing="-0.8" xml:space="preserve">ENO</text><rect x="388" y="607" width="9" height="1" fill="#000"/><text x="356" y="611" font-family="Liberation Mono" font-size="13" fill="#000" letter-spacing="-0.8" xml:space="preserve">M0.1</text><text x="398" y="611" font-family="Liberation Mono" font-size="13" fill="#000" letter-spacing="-0.8" xml:space="preserve">REQ</text><rect x="388" y="639" width="9" height="1" fill="#000"/><text x="342" y="643" font-family="Liberation Mono" font-size="13" fill="#000" letter-spacing="-0.8" xml:space="preserve">W#16#1</text><text x="398" y="643" font-family="Liberation Mono" font-size="13" fill="#000" letter-spacing="-0.8" xml:space="preserve">ID</text><rect x="388" y="703" width="9" height="1" fill="#000"/><text x="314" y="675" font-family="Liberation Mono" font-size="13" fill="#000" letter-spacing="-0.8" xml:space="preserve">P#DB1.DBX </text><text x="314" y="691" font-family="Liberation Mono" font-size="13" fill="#000" letter-spacing="-0.8" xml:space="preserve">40.0 BYTE </text><text x="377" y="707" font-family="Liberation Mono" font-size="13" fill="#000" letter-spacing="-0.8" xml:space="preserve">8</text><text x="398" y="707" font-family="Liberation Mono" font-size="13" fill="#000" letter-spacing="-0.8" xml:space="preserve">ADDR_1</text><rect x="388" y="767" width="9" height="1" fill="#000"/><text x="335" y="739" font-family="Liberation Mono" font-size="13" fill="#000" letter-spacing="-0.8" xml:space="preserve">P#DB20.</text><text x="328" y="755" font-family="Liberation Mono" font-size="13" fill="#000" letter-spacing="-0.8" xml:space="preserve">DBX40.0 </text><text x="342" y="771" font-family="Liberation Mono" font-size="13" fill="#000" letter-spacing="-0.8" xml:space="preserve">BYTE 8</text><text x="398" y="771" font-family="Liberation Mono" font-size="13" fill="#000" letter-spacing="-0.8" xml:space="preserve">SD_1</text><rect x="577" y="607" width="8" height="1" fill="#000"/><text x="532" y="611" font-family="Liberation Mono" font-size="13" fill="#000" letter-spacing="-0.8" xml:space="preserve">DONE</text><text x="585" y="611" font-family="Liberation Mono" font-size="13" fill="#000" letter-spacing="-0.8" xml:space="preserve">M20.0</text><rect x="577" y="639" width="8" height="1" fill="#000"/><text x="525" y="643" font-family="Liberation Mono" font-size="13" fill="#000" letter-spacing="-0.8" xml:space="preserve">ERROR</text><text x="585" y="643" font-family="Liberation Mono" font-size="13" fill="#000" letter-spacing="-0.8" xml:space="preserve">M20.1</text><rect x="577" y="671" width="8" height="1" fill="#000"/><text x="518" y="675" font-family="Liberation Mono" font-size="13" fill="#000" letter-spacing="-0.8" xml:space="preserve">STATUS</text><text x="585" y="675" font-family="Liberation Mono" font-size="13" fill="#000" letter-spacing="-0.8" xml:space="preserve">MW22</text></svg>
</body></html>
